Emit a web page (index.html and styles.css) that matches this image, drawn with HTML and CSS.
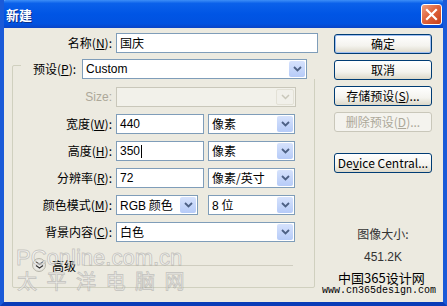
FILE: index.html
```html
<!DOCTYPE html>
<html lang="zh-CN">
<head>
    <meta charset="UTF-8">
    <title>新建</title>
    <link rel="stylesheet" href="styles.css">
</head>
<body>
    <div class="window">
        <div class="titlebar">
            <span class="title">新建</span>
            <span class="close">
                <svg width="13" height="13" viewBox="0 0 13 13"><path d="M2 2 L11 11 M11 2 L2 11" stroke="#fff" stroke-width="2.2" stroke-linecap="square"/></svg>
            </span>
        </div>

        <div class="content">
            <div class="main">
                <div class="name-row">
                    <label class="label">名称(<u>N</u>):</label>
                    <div class="input wide">国庆</div>
                </div>

                <!-- preset group -->
                <div class="group">
                    <div class="legend">
                        <label>预设(<u>P</u>):</label>
                        <div class="select preset"><span class="latin">Custom</span><span class="arrow"><svg width="9" height="6" viewBox="0 0 9 6"><path d="M1 1 L4.5 4.5 L8 1" fill="none" stroke="#4d6185" stroke-width="1.8"/></svg></span></div>
                    </div>

                    <div class="grid">
                        <label class="label disabled latin">Size:</label>
                        <div class="select disabled size"><span></span><span class="arrow"><svg width="9" height="6" viewBox="0 0 9 6"><path d="M1 1 L4.5 4.5 L8 1" fill="none" stroke="#c9c7ba" stroke-width="1.5"/></svg></span></div>

                        <label class="label">宽度(<u>W</u>):</label>
                        <div class="pair">
                            <div class="input num latin">440</div>
                            <div class="select unit"><span>像素</span><span class="arrow"><svg width="9" height="6" viewBox="0 0 9 6"><path d="M1 1 L4.5 4.5 L8 1" fill="none" stroke="#4d6185" stroke-width="1.8"/></svg></span></div>
                        </div>

                        <label class="label">高度(<u>H</u>):</label>
                        <div class="pair">
                            <div class="input num latin">350<span class="caret"></span></div>
                            <div class="select unit"><span>像素</span><span class="arrow"><svg width="9" height="6" viewBox="0 0 9 6"><path d="M1 1 L4.5 4.5 L8 1" fill="none" stroke="#4d6185" stroke-width="1.8"/></svg></span></div>
                        </div>

                        <label class="label">分辨率(<u>R</u>):</label>
                        <div class="pair">
                            <div class="input num latin">72</div>
                            <div class="select unit"><span>像素/英寸</span><span class="arrow"><svg width="9" height="6" viewBox="0 0 9 6"><path d="M1 1 L4.5 4.5 L8 1" fill="none" stroke="#4d6185" stroke-width="1.8"/></svg></span></div>
                        </div>

                        <label class="label">颜色模式(<u>M</u>):</label>
                        <div class="pair">
                            <div class="select mode"><span><span class="latin">RGB</span> 颜色</span><span class="arrow"><svg width="9" height="6" viewBox="0 0 9 6"><path d="M1 1 L4.5 4.5 L8 1" fill="none" stroke="#4d6185" stroke-width="1.8"/></svg></span></div>
                            <div class="select unit"><span><span class="latin">8</span> 位</span><span class="arrow"><svg width="9" height="6" viewBox="0 0 9 6"><path d="M1 1 L4.5 4.5 L8 1" fill="none" stroke="#4d6185" stroke-width="1.8"/></svg></span></div>
                        </div>

                        <label class="label">背景内容(<u>C</u>):</label>
                        <div class="select bg"><span>白色</span><span class="arrow"><svg width="9" height="6" viewBox="0 0 9 6"><path d="M1 1 L4.5 4.5 L8 1" fill="none" stroke="#4d6185" stroke-width="1.8"/></svg></span></div>
                    </div>

                    <div class="advanced">
                        <span class="chevron"><svg width="9" height="8" viewBox="0 0 9 8"><path d="M1 1 L4.5 3.5 L8 1 M1 4.5 L4.5 7 L8 4.5" fill="none" stroke="#333" stroke-width="1.3"/></svg></span>
                        <span>高级</span>
                        <span class="rule"></span>
                    </div>
                </div>
            </div>

            <div class="side">
                <button class="btn default">确定</button>
                <button class="btn">取消</button>
                <button class="btn">存储预设(<u>S</u>)...</button>
                <button class="btn" disabled>删除预设(<u>D</u>)...</button>
                <button class="btn device latin">De<u>v</u>ice Central...</button>
                <div class="info">
                    <div>图像大小:</div>
                    <div class="latin">451.2K</div>
                </div>
            </div>
        </div>

        <!-- watermarks -->
        <div class="mark-pc">PConline.com.cn</div>
        <div class="mark-tpy">太 平 洋 电 脑 网</div>
        <div class="mark-cn">中国365设计网</div>
        <div class="mark-url">www.cn365design.com</div>
    </div>
</body>
</html>
```

FILE: styles.css
```css
body {
    margin: 0;
    padding: 0;
    background: #fff;
    font-family: "Noto Sans CJK SC", "DejaVu Sans", sans-serif;
    font-size: 12px;
    color: #000;
}

.latin {
    font-family: "Liberation Sans", "DejaVu Sans", sans-serif;
    font-size: 12px;
}

u {
    text-decoration: underline;
}

.window {
    position: relative;
    width: 447px;
    height: 306px;
    box-sizing: border-box;
    background: #eceae0;
    border-left: 4px solid #1a5ad8;
    border-right: 4px solid #1a5ad8;
    border-bottom: 4px solid #0a3cb8;
    overflow: hidden;
}

.titlebar {
    height: 28px;
    margin: 0 -4px;
    display: flex;
    align-items: center;
    justify-content: space-between;
    padding: 0 5px 0 6px;
    background: linear-gradient(#3d8ef7 0%, #0b61ea 12%, #0055e5 50%, #0152e0 85%, #0a44c6 100%);
    border-radius: 6px 6px 0 0;
}

.title {
    color: #fff;
    font-weight: bold;
    font-size: 13px;
    text-shadow: 1px 1px 0 #0a2e8a;
}

.close {
    width: 21px;
    height: 21px;
    box-sizing: border-box;
    border: 1px solid #fff;
    border-radius: 3px;
    background: linear-gradient(135deg, #f0a080 0%, #e0653e 45%, #c8401a 100%);
    display: flex;
    align-items: center;
    justify-content: center;
}

.content {
    display: flex;
    gap: 16px;
    padding: 5px 0 0 8px;
}

.main {
    width: 306px;
}

.label {
    text-align: right;
    white-space: nowrap;
    line-height: 20px;
}

.name-row {
    display: flex;
    gap: 4px;
}

.name-row .label {
    width: 100px;
}

.input {
    height: 20px;
    box-sizing: border-box;
    border: 1px solid #7f9db9;
    background: #fff;
    padding: 0 3px;
    line-height: 18px;
    display: flex;
    align-items: center;
}

.input.wide {
    width: 202px;
}

.input.num {
    width: 88px;
}

.caret {
    width: 1px;
    height: 13px;
    background: #000;
    margin-left: 1px;
}

.select {
    height: 20px;
    box-sizing: border-box;
    border: 1px solid #7f9db9;
    background: #fff;
    display: flex;
    justify-content: space-between;
    align-items: stretch;
    padding-left: 3px;
    line-height: 18px;
}

.arrow {
    width: 16px;
    margin: 1px;
    border-radius: 2px;
    background: linear-gradient(#d6e2fc, #b6cbf8);
    display: flex;
    align-items: center;
    justify-content: center;
}

.select.disabled {
    background: #f2f1ea;
    border-color: #c9c7ba;
}

.select.disabled .arrow {
    background: #f1f0ea;
    border: 1px solid #e3e1d6;
}

.label.disabled {
    color: #aca899;
}

.group {
    margin-top: 12px;
    width: 303px;
    height: 223px;
    box-sizing: border-box;
    border: 1px solid #d0d0bf;
    border-radius: 2px;
}

.legend {
    display: flex;
    gap: 6px;
    margin-top: -7px;
    margin-left: 8px;
    padding-left: 12px;
    width: 283px;
    background: #eceae0;
    line-height: 20px;
}

.legend .select {
    width: 225px;
}

.grid {
    display: grid;
    grid-template-columns: 99px 1fr;
    column-gap: 4px;
    row-gap: 7px;
    margin-top: 8px;
}

.select.size {
    width: 180px;
}

.pair {
    display: flex;
    gap: 4px;
}

.select.unit {
    width: 87px;
}

.select.mode {
    width: 82px;
    margin-right: 6px;
}

.select.bg {
    width: 179px;
}

.advanced {
    display: flex;
    align-items: center;
    gap: 6px;
    margin-top: 16px;
    padding-left: 19px;
    height: 14px;
}

.chevron {
    width: 14px;
    height: 14px;
    border-radius: 50%;
    background: radial-gradient(#ffffff, #d8d6cc);
    border: 1px solid #b8b6aa;
    box-sizing: border-box;
    display: flex;
    align-items: center;
    justify-content: center;
}

.rule {
    width: 209px;
    height: 1px;
    background: #cfcdc0;
    margin-left: 2px;
}

.side {
    width: 98px;
    display: flex;
    flex-direction: column;
    gap: 6px;
    padding-top: 1px;
}

.btn {
    height: 20px;
    padding: 0;
    font-family: "Noto Sans CJK SC", "DejaVu Sans", sans-serif;
    font-size: 12px;
    color: #000;
    border: 1px solid #003c74;
    border-radius: 3px;
    background: linear-gradient(#ffffff 0%, #f4f3ee 60%, #dcd8c9 100%);
    line-height: 18px;
}

.btn.default {
    box-shadow: inset 0 0 0 1px #9fbff2;
}

.btn:disabled {
    color: #aca899;
    border-color: #c9c7ba;
    background: #f4f3ee;
}

.btn.device {
    margin-top: 15px;
}

.info {
    margin-top: 46px;
    display: flex;
    flex-direction: column;
    align-items: center;
    gap: 8px;
    color: #333;
}

.mark-pc {
    position: absolute;
    left: 12px;
    top: 245px;
    font-family: "Liberation Sans", sans-serif;
    font-size: 22px;
    color: rgba(255, 255, 255, 0.6);
    -webkit-text-stroke: 1px rgba(120, 120, 120, 0.35);
}

.mark-tpy {
    position: absolute;
    left: 13px;
    top: 270px;
    font-size: 20px;
    line-height: 22px;
    letter-spacing: 2.5px;
    color: rgba(255, 255, 255, 0.55);
    -webkit-text-stroke: 1px rgba(120, 120, 120, 0.35);
}

.mark-cn {
    position: absolute;
    left: 334px;
    top: 270px;
    font-size: 13px;
    line-height: 16px;
    color: #000;
}

.mark-url {
    position: absolute;
    left: 318px;
    top: 285px;
    font-family: "Liberation Mono", monospace;
    font-size: 10px;
    line-height: 12px;
    color: #000;
}
```
